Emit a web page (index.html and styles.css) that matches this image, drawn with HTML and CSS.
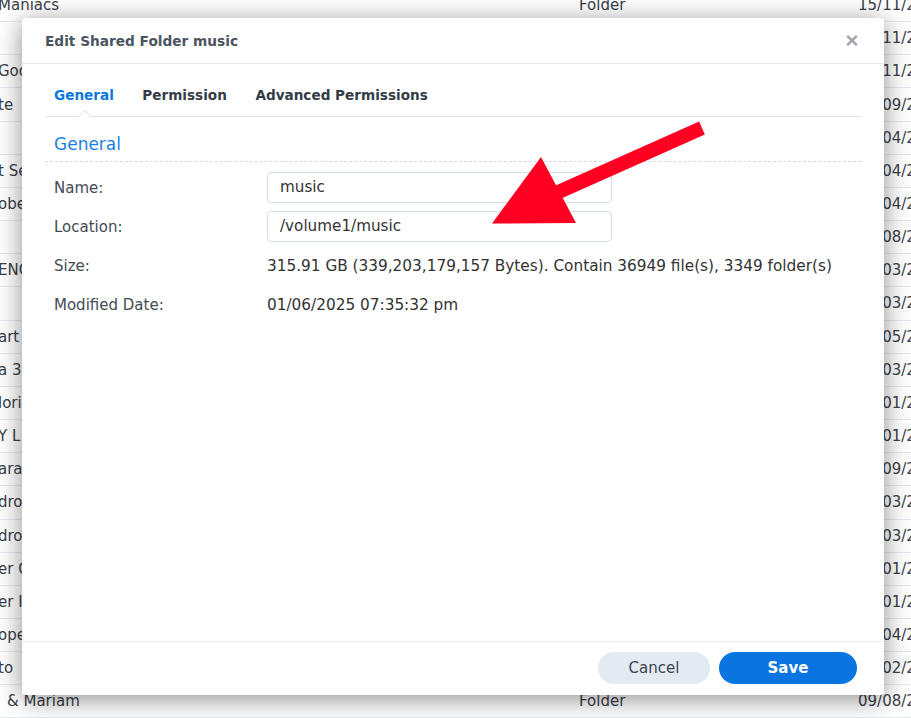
FILE: index.html
```html
<!DOCTYPE html>
<html lang="en">
<head>
<meta charset="utf-8">
<title>Edit Shared Folder music</title>
<link rel="stylesheet" href="styles.css">
</head>
<body>
<div class="list">
  <div class="row"><span class="name">Maniacs</span><span class="type">Folder</span><span class="date">15/11/2023 21:04</span></div>
  <div class="row"><span class="name"></span><span class="type"></span><span class="date">21/11/2023 10:12</span></div>
  <div class="row"><span class="name">God</span><span class="type"></span><span class="date">18/11/2023 09:41</span></div>
  <div class="row"><span class="name">te</span><span class="type"></span><span class="date">12/09/2023 18:22</span></div>
  <div class="row"><span class="name"></span><span class="type"></span><span class="date">03/04/2024 11:05</span></div>
  <div class="row"><span class="name">t Se</span><span class="type"></span><span class="date">14/04/2024 16:30</span></div>
  <div class="row"><span class="name">obel</span><span class="type"></span><span class="date">22/04/2024 20:15</span></div>
  <div class="row"><span class="name"></span><span class="type"></span><span class="date">05/08/2023 08:47</span></div>
  <div class="row"><span class="name">ENC</span><span class="type"></span><span class="date">17/03/2024 13:02</span></div>
  <div class="row"><span class="name"></span><span class="type"></span><span class="date">28/03/2024 19:58</span></div>
  <div class="row"><span class="name">art</span><span class="type"></span><span class="date">10/05/2024 07:33</span></div>
  <div class="row"><span class="name">a 3</span><span class="type"></span><span class="date">02/03/2024 12:19</span></div>
  <div class="row"><span class="name">lori</span><span class="type"></span><span class="date">19/01/2024 22:40</span></div>
  <div class="row"><span class="name">Y L</span><span class="type"></span><span class="date">25/01/2024 15:26</span></div>
  <div class="row"><span class="name">ara</span><span class="type"></span><span class="date">11/09/2023 09:09</span></div>
  <div class="row"><span class="name">dro</span><span class="type"></span><span class="date">07/03/2024 17:51</span></div>
  <div class="row"><span class="name">dro</span><span class="type"></span><span class="date">08/03/2024 17:55</span></div>
  <div class="row"><span class="name">er C</span><span class="type"></span><span class="date">13/01/2024 10:28</span></div>
  <div class="row"><span class="name">er I</span><span class="type"></span><span class="date">16/01/2024 11:44</span></div>
  <div class="row"><span class="name">ope</span><span class="type"></span><span class="date">20/04/2024 14:03</span></div>
  <div class="row"><span class="name">to</span><span class="type"></span><span class="date">26/02/2024 21:37</span></div>
  <div class="row"><span class="name ind">&amp; Mariam</span><span class="type">Folder</span><span class="date">09/08/2024 18:10</span></div>
</div>

<div class="dialog">
  <div class="dlg-head">
    <span class="dlg-title">Edit Shared Folder music</span>
    <button class="close" aria-label="Close">
      <svg width="12" height="11" viewBox="0 0 12 11"><path d="M1.2 0.8 L10.8 10.2 M10.8 0.8 L1.2 10.2" stroke="#9ea5ac" stroke-width="2.4" stroke-linecap="butt" fill="none"/></svg>
    </button>
  </div>
  <div class="dlg-body">
    <div class="tabs">
      <span class="tab active">General</span>
      <span class="tab">Permission</span>
      <span class="tab">Advanced Permissions</span>
    </div>
    <div class="section-title">General</div>
    <div class="form">
      <div class="field"><span class="label">Name:</span><div class="input">music</div></div>
      <div class="field"><span class="label">Location:</span><div class="input">/volume1/music</div></div>
      <div class="field"><span class="label">Size:</span><span class="value">315.91 GB (339,203,179,157 Bytes). Contain 36949 file(s), 3349 folder(s)</span></div>
      <div class="field"><span class="label">Modified Date:</span><span class="value">01/06/2025 07:35:32 pm</span></div>
    </div>
  </div>
  <div class="dlg-foot">
    <button class="btn cancel">Cancel</button>
    <button class="btn save">Save</button>
  </div>
</div>

<svg class="arrow" width="911" height="718" viewBox="0 0 911 718">
  <line x1="702" y1="128" x2="554" y2="194" stroke="#ff0022" stroke-width="14" stroke-linecap="butt"/>
  <polygon points="541,157 492,223.5 576,223" fill="#ff0022"/>
</svg>
</body>
</html>
```

FILE: styles.css
```css
* {
  box-sizing: border-box;
  margin: 0;
  padding: 0;
}

html, body {
  width: 911px;
  height: 718px;
  overflow: hidden;
  background: #ffffff;
}

body {
  position: relative;
  font-family: "DejaVu Sans", Verdana, sans-serif;
  color: #333;
}

/* background file list */
.list {
  margin-top: -11px;
}

.row {
  display: grid;
  grid-template-columns: 579px 279px 1fr;
  align-items: center;
  height: 33.17px;
  border-bottom: 1px solid #e4e9ef;
  font-size: 15px;
  color: #3a4047;
  white-space: nowrap;
}

.name {
  margin-left: -2px;
}

.name.ind {
  padding-left: 9px;
}

/* dialog */
.dialog {
  position: absolute;
  left: 22px;
  top: 18px;
  width: 862px;
  height: 677px;
  background: #fff;
  border-radius: 4px;
  box-shadow: 0 4px 26px rgba(0, 0, 0, 0.45);
  display: flex;
  flex-direction: column;
}

.dlg-head {
  height: 46px;
  border-bottom: 1px solid #e2e8ee;
  display: flex;
  align-items: center;
  justify-content: space-between;
  padding: 0 26px 0 23px;
}

.dlg-title {
  font-weight: bold;
  font-size: 13.7px;
  color: #4b5560;
}

.close {
  border: 0;
  background: none;
  width: 12px;
  height: 11px;
  display: flex;
}

.dlg-body {
  flex: 1;
  padding: 16px 23px 0;
}

.tabs {
  display: flex;
  gap: 10.5px;
  border-bottom: 1px solid #dde4ec;
}

.tab {
  position: relative;
  padding: 5px 9px 11px;
  line-height: 20px;
  font-size: 13.6px;
  font-weight: bold;
  color: #333c46;
}

.tab.active {
  color: #0b78e1;
}

.tab.active::after {
  content: "";
  position: absolute;
  left: 50%;
  bottom: -5px;
  width: 8.5px;
  height: 8.5px;
  margin-left: -4.25px;
  background: #fff;
  border-top: 1px solid #dde4ec;
  border-left: 1px solid #dde4ec;
  transform: rotate(45deg);
}

.section-title {
  margin-top: 15px;
  padding: 0 9px 5px;
  line-height: 24px;
  font-size: 17px;
  color: #1a7fe0;
  border-bottom: 1px dashed #d3d9df;
}

.form {
  padding: 10px 9px 0;
  display: flex;
  flex-direction: column;
  gap: 8px;
}

.field {
  display: grid;
  grid-template-columns: 213px 1fr;
  align-items: center;
  height: 31px;
  font-size: 15px;
}

.label {
  color: #434b54;
}

.value {
  color: #333;
  font-size: 15.3px;
  white-space: nowrap;
}

.input {
  width: 345px;
  height: 31px;
  border: 1px solid #d5dde6;
  border-radius: 4px;
  padding: 0 12px;
  line-height: 29px;
  font-size: 15.2px;
  color: #333;
}

.dlg-foot {
  border-top: 1px solid #e6eaef;
  padding: 10px 27px 11px 0;
  display: flex;
  justify-content: flex-end;
  gap: 9px;
}

.btn {
  height: 32px;
  border: 0;
  border-radius: 16px;
  font-family: "DejaVu Sans", Verdana, sans-serif;
  font-size: 15px;
}

.btn.cancel {
  width: 112px;
  background: #e4eaf1;
  color: #3b4550;
}

.btn.save {
  width: 138px;
  background: #0a74e0;
  color: #fff;
  font-weight: bold;
}

/* annotation arrow drawn over the screenshot */
.arrow {
  position: absolute;
  left: 0;
  top: 0;
  pointer-events: none;
}
```
